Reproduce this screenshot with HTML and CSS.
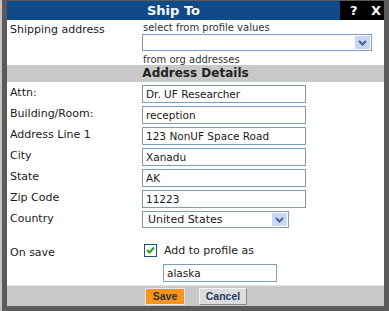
FILE: index.html
```html
<!DOCTYPE html>
<html>
<head>
<meta charset="utf-8">
<link rel="stylesheet" href="styles.css">
</head>
<body>
<div class="dialog">
  <div class="titlebar">
    <div class="title">Ship To</div>
    <div class="tools"><span>?</span><span>X</span></div>
  </div>
  <div class="shipping">
    <div class="label">Shipping address</div>
    <div class="ship-values">
      <div class="hint">select from profile values</div>
      <div class="select-wrap wide">
        <select class="select"><option></option></select>
        <span class="arrow"><svg width="15" height="14" viewBox="0 0 15 14"><path d="M4 5 L7.5 8.5 L11 5" fill="none" stroke="#4d6185" stroke-width="2"/></svg></span>
      </div>
      <div class="hint">from org addresses</div>
    </div>
  </div>
  <div class="section">Address Details</div>
  <div class="fields">
    <div class="label">Attn:</div><input class="text" value="Dr. UF Researcher">
    <div class="label">Building/Room:</div><input class="text" value="reception">
    <div class="label">Address Line 1</div><input class="text" value="123 NonUF Space Road">
    <div class="label">City</div><input class="text" value="Xanadu">
    <div class="label">State</div><input class="text" value="AK">
    <div class="label">Zip Code</div><input class="text" value="11223">
    <div class="label">Country</div>
    <div class="select-wrap country">
      <select class="select"><option>United States</option></select>
      <span class="arrow"><svg width="15" height="14" viewBox="0 0 15 14"><path d="M4 5 L7.5 8.5 L11 5" fill="none" stroke="#4d6185" stroke-width="2"/></svg></span>
    </div>
  </div>
  <div class="onsave">
    <div class="label">On save</div>
    <div class="save-values">
      <label class="check-row"><span class="check"><svg width="11" height="11" viewBox="0 0 11 11"><path d="M2 5 L4.5 7.5 L9 2.5" fill="none" stroke="#21a121" stroke-width="2"/></svg></span>Add to profile as</label>
      <input class="text alias" value="alaska">
    </div>
  </div>
  <div class="footer">
    <button class="btn save">Save</button>
    <button class="btn cancel">Cancel</button>
  </div>
</div>
</body>
</html>
```
FILE: styles.css
```css
html { background: #5a5a5a; }
body {
  margin: 0;
  padding: 1px 5px 5px 5px;
  border-left: 2px solid #c4c4c4;
  background: #5a5a5a;
  font-family: "DejaVu Sans", Verdana, sans-serif;
  font-size: 11px;
  color: #1a1a1a;
}
.dialog { background: #fff; }
.titlebar {
  display: grid;
  grid-template-columns: 1fr 44px;
  height: 19px;
}
.title {
  background: #0f4a89;
  color: #fff;
  font-weight: bold;
  font-size: 13px;
  text-align: center;
  line-height: 19px;
}
.tools {
  background: #000;
  color: #fff;
  font-weight: bold;
  font-size: 13px;
  display: flex;
  justify-content: space-between;
  padding: 0 3px 0 10px;
  line-height: 19px;
}
.shipping {
  display: grid;
  grid-template-columns: 135px 1fr;
  padding-top: 2px;
  height: 43px;
}
.label { padding-left: 3px; line-height: 14px; padding-top: 1px; }
.hint { font-size: 10px; color: #333; line-height: 12px; padding-left: 1px; }
.select-wrap { position: relative; height: 17px; box-sizing: border-box; }
.select-wrap.wide { width: 230px; margin: 0 0 3px 0; }
.select-wrap.country { width: 147px; }
.select {
  appearance: none;
  -webkit-appearance: none;
  width: 100%;
  height: 100%;
  border: 1px solid #7f9db9;
  background: #fff;
  font-family: inherit;
  font-size: 11px;
  color: #1a1a1a;
  padding: 0 0 0 5px;
  margin: 0;
  border-radius: 0;
  box-sizing: border-box;
}
.arrow {
  position: absolute;
  right: 2px;
  top: 2px;
  width: 15px;
  height: 13px;
  background: #c8d6f7;
  border-radius: 1px;
  display: flex;
  align-items: center;
  justify-content: center;
  pointer-events: none;
}
.section {
  background: #c8c8c8;
  text-align: center;
  font-weight: bold;
  font-size: 12px;
  height: 17px;
  line-height: 17px;
  color: #222;
}
.fields {
  display: grid;
  grid-template-columns: 135px 164px;
  grid-auto-rows: 21px;
  padding-top: 3px;
}
.fields .label { padding-top: 1px; }
.text {
  box-sizing: border-box;
  width: 164px;
  height: 18px;
  border: 1px solid #7f9db9;
  font-family: inherit;
  font-size: 10.5px;
  color: #1a1a1a;
  padding: 0 3px;
  margin: 0;
  background: #fff;
}
.onsave {
  display: grid;
  grid-template-columns: 135px 1fr;
  padding-top: 12px;
  height: 53px;
  box-sizing: border-box;
}
.onsave .label { padding-top: 2px; }
.save-values { display: flex; flex-direction: column; gap: 7px; }
.check-row {
  display: flex;
  align-items: center;
  gap: 7px;
  padding-left: 2px;
  font-size: 11px;
  height: 13px;
}
.check {
  width: 13px;
  height: 13px;
  box-sizing: border-box;
  border: 1px solid #1c5180;
  background: #fff;
  display: flex;
  align-items: center;
  justify-content: center;
}
.alias { width: 114px; margin-left: 21px; }
.footer {
  background: #c8c8c8;
  border-top: 1px solid #e6e6e6;
  height: 20px;
  display: flex;
  align-items: center;
  padding-left: 138px;
  gap: 14px;
}
.btn {
  font-family: "Liberation Sans", Arial, sans-serif;
  font-weight: bold;
  font-size: 10.5px;
  height: 17px;
  padding: 0;
  margin: 0;
  border-radius: 0;
}
.save {
  background: #f7931e;
  color: #333;
  border: 1px solid #e9e9e9;
  width: 40px;
}
.cancel {
  background: #dcdcdc;
  color: #1c3a66;
  border: 1px solid #f4f4f4;
  border-right-color: #8a8a8a;
  border-bottom-color: #8a8a8a;
  width: 48px;
}
```
